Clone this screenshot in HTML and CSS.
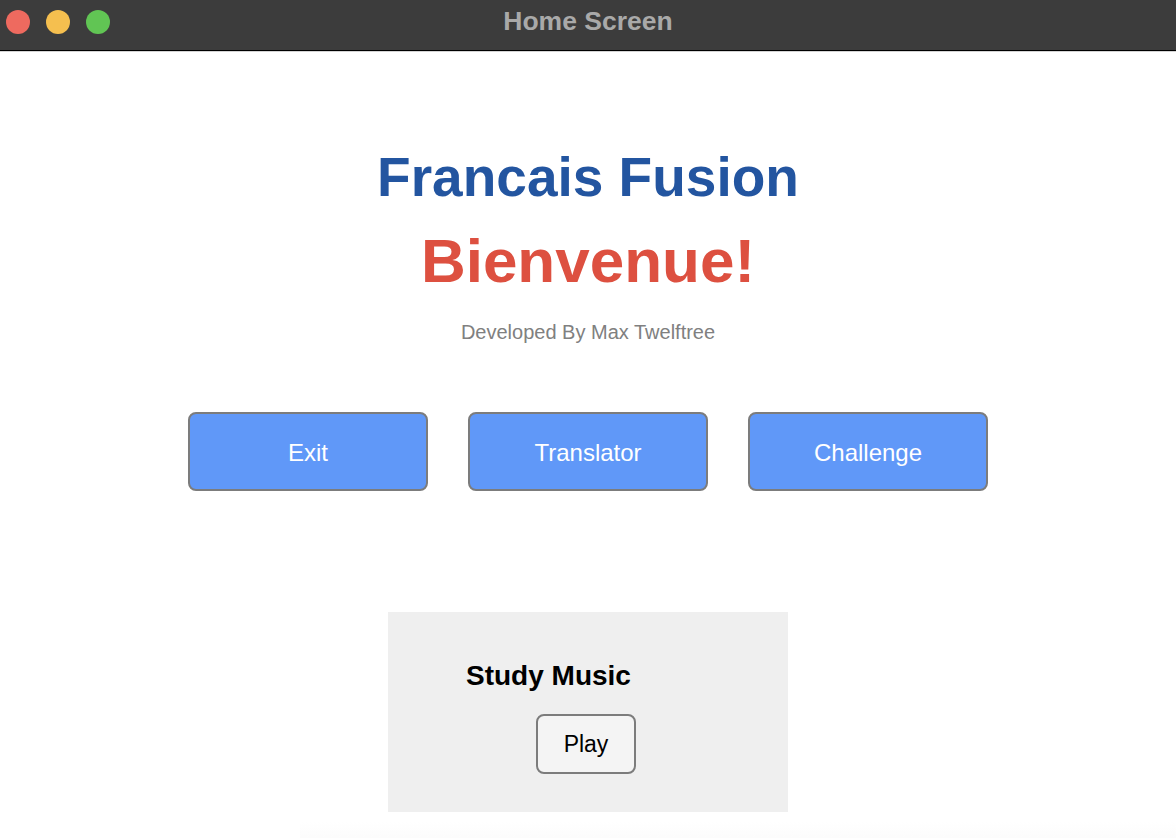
FILE: index.html
```html
<!DOCTYPE html>
<html lang="en">
<head>
<meta charset="utf-8">
<title>Home Screen</title>
<link rel="stylesheet" href="styles.css">
</head>
<body>
<div class="window">
  <header class="titlebar">
    <div class="lights">
      <span class="light red"></span>
      <span class="light yellow"></span>
      <span class="light green"></span>
    </div>
    <div class="title">Home Screen</div>
    <div class="spacer"></div>
  </header>
  <main class="content">
    <h1 class="app-name">Francais Fusion</h1>
    <h2 class="welcome">Bienvenue!</h2>
    <p class="credit">Developed By Max Twelftree</p>
    <div class="actions">
      <button class="action">Exit</button>
      <button class="action">Translator</button>
      <button class="action">Challenge</button>
    </div>
    <section class="music">
      <h3 class="music-title">Study Music</h3>
      <button class="play">Play</button>
    </section>
    <div class="fade-strip"></div>
  </main>
</div>
</body>
</html>
```

FILE: styles.css
```css
* { box-sizing: border-box; }

html, body {
  margin: 0;
  padding: 0;
  background: #ffffff;
  font-family: "Liberation Sans", Arial, Helvetica, sans-serif;
  overflow: hidden;
}

.window {
  width: 1176px;
  height: 838px;
  display: flex;
  flex-direction: column;
}

.titlebar {
  height: 51px;
  background: #3c3c3c;
  border-bottom: 1px solid #000;
  box-shadow: 0 1px 0 #d4d4d4;
  margin-bottom: 1px;
  display: grid;
  grid-template-columns: 1fr auto 1fr;
  align-items: start;
  flex-shrink: 0;
}

.lights {
  display: flex;
  gap: 16px;
  padding: 10px 0 0 6px;
}

.light {
  width: 24px;
  height: 24px;
  border-radius: 50%;
  display: block;
}
.light.red { background: #ee6a5f; }
.light.yellow { background: #f5bf4f; }
.light.green { background: #61c554; }

.title {
  font-size: 26.5px;
  font-weight: bold;
  color: #a9a9a9;
  line-height: 30px;
  padding-top: 6px;
}

.content {
  flex: 1;
  display: flex;
  flex-direction: column;
  align-items: center;
  padding-top: 93px;
}

.app-name {
  margin: 0;
  font-size: 55px;
  line-height: 64px;
  font-weight: bold;
  color: #2355a0;
}

.welcome {
  margin: 16px 0 0;
  font-size: 62px;
  line-height: 72px;
  font-weight: bold;
  color: #dd5040;
}

.credit {
  margin: 23px 0 0;
  font-size: 20px;
  line-height: 24px;
  color: #808080;
}

.actions {
  margin-top: 68px;
  display: flex;
  gap: 40px;
}

.action {
  width: 240px;
  height: 79px;
  background: #6098f8;
  border: 2px solid #7c7c7c;
  border-radius: 8px;
  color: #ffffff;
  font-family: inherit;
  font-size: 24px;
  padding: 2px 0 0;
}

.music {
  margin-top: 121px;
  width: 400px;
  height: 200px;
  background: #efefef;
  padding: 48px 0 0 78px;
  display: flex;
  flex-direction: column;
  align-items: flex-start;
}

.music-title {
  margin: 0;
  font-size: 28px;
  line-height: 32px;
  font-weight: bold;
  color: #000;
}

.play {
  margin: 22px 0 0 70px;
  width: 100px;
  height: 60px;
  background: #f4f4f4;
  border: 2px solid #7c7c7c;
  border-radius: 8px;
  color: #000;
  font-family: inherit;
  font-size: 23px;
  padding: 0;
}

.fade-strip {
  align-self: stretch;
  margin: 10px 0 0 300px;
  height: 20px;
  background: linear-gradient(to bottom, #ffffff, #fbfbfb);
}
```
